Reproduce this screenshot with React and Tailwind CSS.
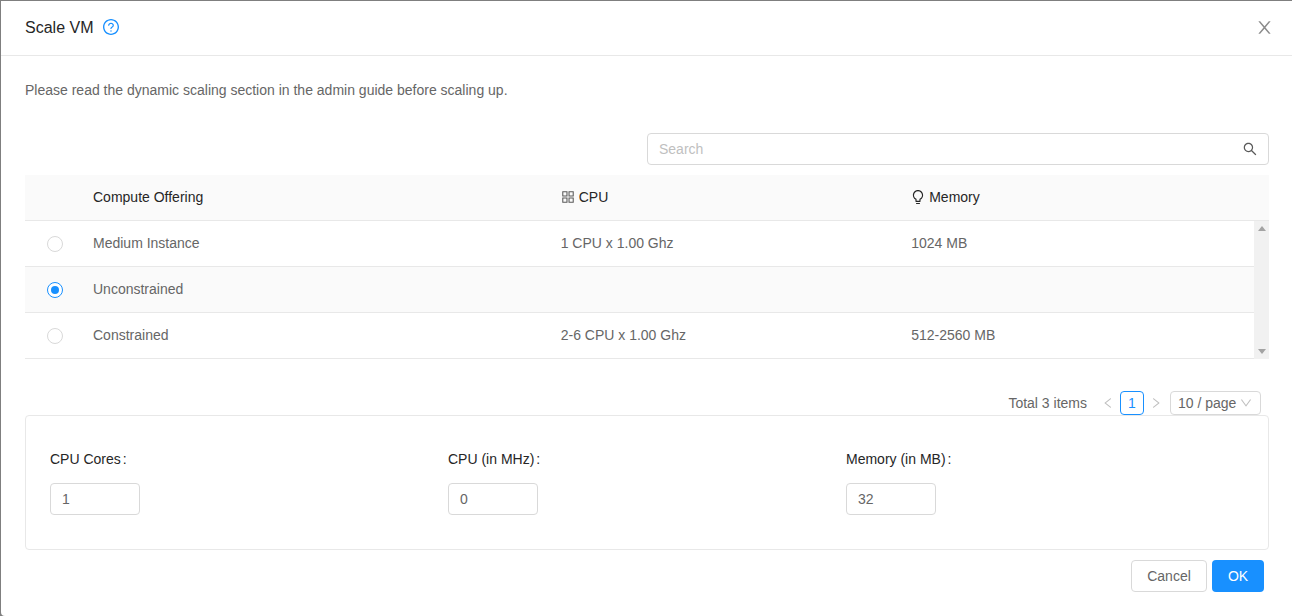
const Icon = ({ d, className }) => (
  <svg viewBox="64 64 896 896" fill="currentColor" className={className}>
    {d.map((p) => (
      <path key={p} d={p} />
    ))}
  </svg>
)

const question = [
  'M512 64C264.6 64 64 264.6 64 512s200.6 448 448 448 448-200.6 448-448S759.4 64 512 64zm0 820c-205.4 0-372-166.6-372-372s166.6-372 372-372 372 166.6 372 372-166.6 372-372 372z',
  'M623.6 316.7C593.6 290.4 554 276 512 276s-81.6 14.5-111.6 40.7C369.2 344 352 380.7 352 420v7.6c0 4.4 3.6 8 8 8h48c4.4 0 8-3.6 8-8V420c0-44.1 43.1-80 96-80s96 35.9 96 80c0 31.1-22 59.6-56.1 72.7-21.2 8.1-39.2 22.3-52.1 40.9-13.1 19-19.9 41.8-19.9 64.9V620c0 4.4 3.6 8 8 8h48c4.4 0 8-3.6 8-8v-22.7a48.3 48.3 0 0 1 30.9-44.8c59-22.7 97.1-74.7 97.1-132.5.1-39.3-17.1-76-48.3-103.3zM472 732a40 40 0 1 0 80 0 40 40 0 1 0-80 0z',
]
const close = ['M563.8 512l262.5-312.9c4.4-5.2.7-13.1-6.1-13.1h-79.8c-4.7 0-9.2 2.1-12.3 5.7L511.6 449.8 295.1 191.7c-3-3.6-7.5-5.7-12.3-5.7H203c-6.8 0-10.5 7.9-6.1 13.1L459.4 512 196.9 824.9A7.95 7.95 0 0 0 203 838h79.8c4.7 0 9.2-2.1 12.3-5.7l216.5-258.1 216.5 258.1c3 3.6 7.5 5.7 12.3 5.7h79.8c6.8 0 10.5-7.9 6.1-13.1L563.8 512z']
const search = ['M909.6 854.5L649.9 594.8C690.2 542.7 712 479 712 412c0-80.2-31.3-155.4-87.9-212.1-56.6-56.7-132-87.9-212.1-87.9s-155.5 31.3-212.1 87.9C143.2 256.5 112 331.8 112 412c0 80.1 31.3 155.5 87.9 212.1C256.5 680.8 331.8 712 412 712c67 0 130.6-21.8 182.7-62l259.7 259.6a8.2 8.2 0 0 0 11.6 0l43.6-43.5a8.2 8.2 0 0 0 0-11.6zM570.4 570.4C528 612.7 471.8 636 412 636s-116-23.3-158.4-65.6C211.3 528 188 471.8 188 412s23.3-116.1 65.6-158.4C296 211.3 352.2 188 412 188s116.1 23.2 158.4 65.6S636 352.2 636 412s-23.3 116.1-65.6 158.4z']
const appstore = ['M464 144H160c-8.8 0-16 7.2-16 16v304c0 8.8 7.2 16 16 16h304c8.8 0 16-7.2 16-16V160c0-8.8-7.2-16-16-16zm-52 268H212V212h200v200zm452-268H560c-8.8 0-16 7.2-16 16v304c0 8.8 7.2 16 16 16h304c8.8 0 16-7.2 16-16V160c0-8.8-7.2-16-16-16zm-52 268H612V212h200v200zM464 544H160c-8.8 0-16 7.2-16 16v304c0 8.8 7.2 16 16 16h304c8.8 0 16-7.2 16-16V560c0-8.8-7.2-16-16-16zm-52 268H212V612h200v200zm452-268H560c-8.8 0-16 7.2-16 16v304c0 8.8 7.2 16 16 16h304c8.8 0 16-7.2 16-16V560c0-8.8-7.2-16-16-16zm-52 268H612V612h200v200z']
const bulb = ['M632 888H392c-4.4 0-8 3.6-8 8v32c0 17.7 14.3 32 32 32h192c17.7 0 32-14.3 32-32v-32c0-4.4-3.6-8-8-8zM512 64c-181.1 0-328 146.9-328 328 0 121.4 66 227.4 164 284.1V792c0 17.7 14.3 32 32 32h264c17.7 0 32-14.3 32-32V676.1c98-56.7 164-162.7 164-284.1 0-181.1-146.9-328-328-328zm127.9 549.8L604 634.6V752H420V634.6l-35.9-20.8C305.4 568.3 256 484.5 256 392c0-141.4 114.6-256 256-256s256 114.6 256 256c0 92.5-49.4 176.3-128.1 221.8z']
const left = ['M724 218.3V141c0-6.7-7.7-10.4-12.9-6.3L260.3 486.8a31.86 31.86 0 0 0 0 50.3l450.8 352.1c5.3 4.1 12.9.4 12.9-6.3v-77.3c0-4.9-2.3-9.6-6.1-12.6l-360-281 360-281.1c3.8-3 6.1-7.7 6.1-12.6z']
const right = ['M765.7 486.8L314.9 134.7A7.97 7.97 0 0 0 302 141v77.3c0 4.9 2.3 9.6 6.1 12.6l360 281.1-360 281.1c-3.9 3-6.1 7.7-6.1 12.6V883c0 6.7 7.7 10.4 12.9 6.3l450.8-352.1a31.96 31.96 0 0 0 0-50.4z']
const down = ['M884 256h-75c-5.1 0-9.9 2.5-12.9 6.6L512 654.2 227.9 262.6c-3-4.1-7.8-6.6-12.9-6.6h-75c-6.5 0-10.3 7.4-6.5 12.7l352.6 486.1c12.8 17.6 39 17.6 51.7 0l352.6-486.1c3.9-5.3.1-12.7-6.4-12.7z']

const rows = [
  { name: 'Medium Instance', cpu: '1 CPU x 1.00 Ghz', memory: '1024 MB' },
  { name: 'Unconstrained', cpu: '', memory: '', selected: true },
  { name: 'Constrained', cpu: '2-6 CPU x 1.00 Ghz', memory: '512-2560 MB' },
]

const fields = [
  { label: 'CPU Cores', value: '1' },
  { label: 'CPU (in MHz)', value: '0' },
  { label: 'Memory (in MB)', value: '32' },
]

const Radio = ({ checked }) => (
  <span className={`mt-px flex size-4 items-center justify-center rounded-full border bg-white ${checked ? 'border-[#1890ff]' : 'border-[#d9d9d9]'}`}>
    {checked && <span className="size-2 rounded-full bg-[#1890ff]" />}
  </span>
)

const App = () => {
  return (
    <div className="h-screen overflow-hidden bg-[#7f7f7f] pl-px pt-px font-['Liberation_Sans',sans-serif] text-sm text-[#666666]">
      <div className="flex h-full flex-col rounded-bl bg-white">

        {/* Header */}
        <div className="flex h-[55px] shrink-0 items-center justify-between border-b border-[#e8e8e8] pl-6 pr-[19px]">
          <div className="flex items-center gap-[10px]">
            <span className="text-base leading-[22px] text-[#262626]">Scale VM</span>
            <Icon d={question} className="mb-[2px] size-4 text-[#1890ff]" />
          </div>
          <Icon d={close} className="mb-px size-[17px] text-[#8c8c8c]" />
        </div>

        <div className="flex flex-1 flex-col pl-6 pr-[23px] pt-6">
          <p className="leading-[20px]">Please read the dynamic scaling section in the admin guide before scaling up.</p>

          {/* Search */}
          <div className="mt-[33px] flex justify-end">
            <div className="flex h-8 w-[622px] items-center justify-between rounded border border-[#d9d9d9] pl-[11px] pr-[11px]">
              <span className="text-[#bfbfbf]">Search</span>
              <Icon d={search} className="size-[14px] text-[#595959]" />
            </div>
          </div>

          {/* Table */}
          <div className="mt-[10px]">
            <div className="grid h-[46px] grid-cols-[68px_467.7px_350.5px_1fr] items-center border-b border-[#e8e8e8] bg-[#fafafa] pb-px text-[#262626]">
              <span />
              <span>Compute Offering</span>
              <span className="flex items-center gap-1">
                <Icon d={appstore} className="size-[14px] text-[#595959]" />
                CPU
              </span>
              <span className="flex items-center gap-1">
                <Icon d={bulb} className="size-[14px] text-[#262626]" />
                Memory
              </span>
            </div>
            <div className="flex">
              <div className="flex-1">
                {rows.map((row) => (
                  <div
                    key={row.name}
                    className={`grid h-[46px] grid-cols-[46px_467.7px_350.5px_1fr] items-center border-b border-[#e8e8e8] pb-px pl-[22px] ${row.selected ? 'bg-[#fafafa]' : ''}`}
                  >
                    <Radio checked={row.selected} />
                    <span>{row.name}</span>
                    <span>{row.cpu}</span>
                    <span>{row.memory}</span>
                  </div>
                ))}
              </div>
              <div className="flex w-[15px] flex-col items-center justify-between bg-[#f1f1f1] py-[5px]">
                <svg viewBox="0 0 8 5" className="h-[5px] w-2 fill-[#a3a3a3]"><path d="M4 0l4 5H0z" /></svg>
                <svg viewBox="0 0 8 5" className="h-[5px] w-2 fill-[#a3a3a3]"><path d="M0 0h8L4 5z" /></svg>
              </div>
            </div>
          </div>

          {/* Pagination */}
          <div className="mt-8 flex h-6 items-center justify-end pr-2">
            <span className="mr-[15px]">Total 3 items</span>
            <Icon d={left} className="mr-[6px] size-3 text-[#bfbfbf]" />
            <span className="flex size-6 items-center justify-center rounded border border-[#1890ff] text-[#1890ff]">1</span>
            <Icon d={right} className="ml-[6px] size-3 text-[#bfbfbf]" />
            <div className="ml-2 flex h-6 w-[91px] items-center justify-between rounded border border-[#d9d9d9] pl-[7px] pr-2">
              <span>10 / page</span>
              <Icon d={down} className="size-3 text-[#bfbfbf]" />
            </div>
          </div>

          {/* Scale form */}
          <div className="grid h-[135px] grid-cols-[398px_398px_1fr] rounded-sm border border-[#e8e8e8] px-6 pt-[33px]">
            {fields.map((field) => (
              <div key={field.label}>
                <label className="block leading-[20px] text-[#262626]">{field.label}<span className="ml-[2px]">:</span></label>
                <div className="mt-[14px] flex h-8 w-[90px] items-center rounded border border-[#d9d9d9] pl-[11px]">{field.value}</div>
              </div>
            ))}
          </div>

          {/* Footer */}
          <div className="mt-[10px] flex justify-end gap-[5px] pr-[5px]">
            <button className="h-8 w-[76px] rounded border border-[#d9d9d9] bg-white">Cancel</button>
            <button className="h-8 w-[52px] rounded bg-[#1890ff] text-white">OK</button>
          </div>
        </div>

      </div>
    </div>
  )
}

export default App
